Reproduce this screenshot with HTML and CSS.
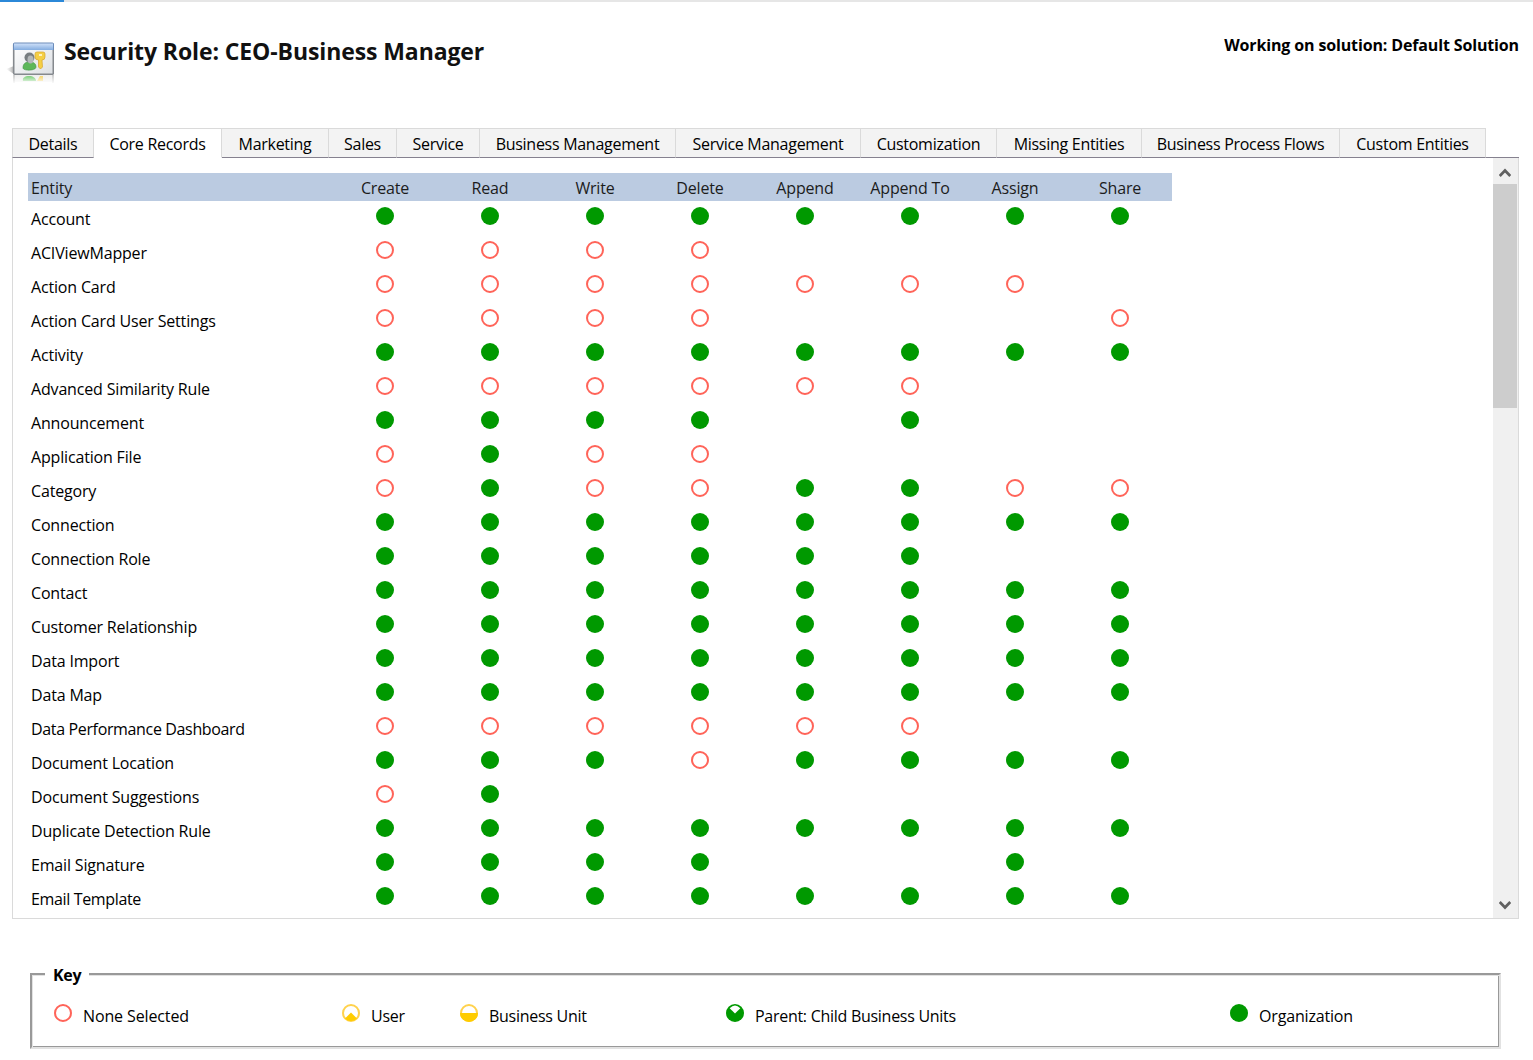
FILE: index.html
```html
<!DOCTYPE html>
<html lang="en">
<head>
<meta charset="utf-8">
<title>Security Role: CEO-Business Manager</title>
<link rel="stylesheet" href="styles.css">
</head>
<body>
<div class="progress"><div class="progress-bar"></div></div>
<header class="header">
<svg class="role-icon" width="48" height="44" viewBox="0 0 48 44">
<defs>
<linearGradient id="bar" x1="0" y1="0" x2="0" y2="1"><stop offset="0" stop-color="#d3e3fa"/><stop offset="1" stop-color="#84ade0"/></linearGradient>
<linearGradient id="pane" x1="0" y1="0" x2="1" y2="1"><stop offset="0" stop-color="#fff"/><stop offset="1" stop-color="#dcdfe3"/></linearGradient>
<linearGradient id="fade" x1="0" y1="0" x2="0" y2="1"><stop offset="0" stop-color="#fff" stop-opacity="0"/><stop offset="1" stop-color="#fff"/></linearGradient>
<linearGradient id="cast" x1="0" y1="0" x2="1" y2="0"><stop offset="0" stop-color="#ccc" stop-opacity="0"/><stop offset="1" stop-color="#aaa"/></linearGradient>
</defs>
<path d="M0 28l8-3v8z" fill="url(#cast)"/>
<path d="M8 34v8M47 34v8" stroke="#999"/>
<rect x="9" y="34" width="37" height="7" fill="#eee"/>
<path d="M17 40c-1-3 2-5 6-5s7 2 7 5z" fill="#6fca6c"/>
<path d="M31 40l3-5h3v5z" fill="#f2d060"/>
<rect x="7" y="34" width="41" height="9" fill="url(#fade)"/>
<rect x="7.700" y="2.700" width="39.600" height="30.600" rx="1" fill="url(#pane)" stroke="#85898e" stroke-width="1.600"/>
<rect x="7" y="2" width="41" height="7" rx="1" fill="url(#bar)"/>
<path d="M7.500 9V3q0-1 1-1h38q1 0 1 1v6" fill="none" stroke="#6c8cb9"/>
<path d="M17 27c0-5 3-6 7-6s6 2 6 5c0 4-13 4-13 1z" fill="#5db75a" stroke="#3f9445" stroke-width=".6"/>
<circle cx="23.500" cy="16.500" r="5" fill="#777d80"/>
<ellipse cx="24.500" cy="18.500" rx="3" ry="4" fill="#b4b8b9"/>
<path d="M29 13q0-2 2-2h6q2 0 2 2v3q0 3-3 3l.5 7-2 2-2-2V19q-3.500 0-3.500-3z" fill="#f5cf45" stroke="#d6a42b" stroke-width=".7"/>
<rect x="33" y="13" width="3" height="2" fill="#fff3bc"/>
</svg>
<h1 class="title">Security Role: CEO-Business Manager</h1>
<div class="solution">Working on solution: Default Solution</div>
</header>
<nav class="tabs">
<div class="tab t1">Details</div><div class="tab t2 active">Core Records</div><div class="tab t3">Marketing</div><div class="tab t4">Sales</div><div class="tab t5">Service</div><div class="tab t6">Business Management</div><div class="tab t7">Service Management</div><div class="tab t8">Customization</div><div class="tab t9">Missing Entities</div><div class="tab t10">Business Process Flows</div><div class="tab t11">Custom Entities</div><div class="tab-rest"></div>
</nav>
<main class="panel">
<div class="content">
<div class="row head"><span>Entity</span><b>Create</b><b>Read</b><b>Write</b><b>Delete</b><b>Append</b><b>Append To</b><b>Assign</b><b>Share</b></div>
<div class="row"><span>Account</span><i class="org"></i><i class="org"></i><i class="org"></i><i class="org"></i><i class="org"></i><i class="org"></i><i class="org"></i><i class="org"></i></div>
<div class="row"><span>ACIViewMapper</span><i class="none"></i><i class="none"></i><i class="none"></i><i class="none"></i></div>
<div class="row"><span>Action Card</span><i class="none"></i><i class="none"></i><i class="none"></i><i class="none"></i><i class="none"></i><i class="none"></i><i class="none"></i></div>
<div class="row"><span>Action Card User Settings</span><i class="none"></i><i class="none"></i><i class="none"></i><i class="none"></i><em></em><em></em><em></em><i class="none"></i></div>
<div class="row"><span>Activity</span><i class="org"></i><i class="org"></i><i class="org"></i><i class="org"></i><i class="org"></i><i class="org"></i><i class="org"></i><i class="org"></i></div>
<div class="row"><span>Advanced Similarity Rule</span><i class="none"></i><i class="none"></i><i class="none"></i><i class="none"></i><i class="none"></i><i class="none"></i></div>
<div class="row"><span>Announcement</span><i class="org"></i><i class="org"></i><i class="org"></i><i class="org"></i><em></em><i class="org"></i></div>
<div class="row"><span>Application File</span><i class="none"></i><i class="org"></i><i class="none"></i><i class="none"></i></div>
<div class="row"><span>Category</span><i class="none"></i><i class="org"></i><i class="none"></i><i class="none"></i><i class="org"></i><i class="org"></i><i class="none"></i><i class="none"></i></div>
<div class="row"><span>Connection</span><i class="org"></i><i class="org"></i><i class="org"></i><i class="org"></i><i class="org"></i><i class="org"></i><i class="org"></i><i class="org"></i></div>
<div class="row"><span>Connection Role</span><i class="org"></i><i class="org"></i><i class="org"></i><i class="org"></i><i class="org"></i><i class="org"></i></div>
<div class="row"><span>Contact</span><i class="org"></i><i class="org"></i><i class="org"></i><i class="org"></i><i class="org"></i><i class="org"></i><i class="org"></i><i class="org"></i></div>
<div class="row"><span>Customer Relationship</span><i class="org"></i><i class="org"></i><i class="org"></i><i class="org"></i><i class="org"></i><i class="org"></i><i class="org"></i><i class="org"></i></div>
<div class="row"><span>Data Import</span><i class="org"></i><i class="org"></i><i class="org"></i><i class="org"></i><i class="org"></i><i class="org"></i><i class="org"></i><i class="org"></i></div>
<div class="row"><span>Data Map</span><i class="org"></i><i class="org"></i><i class="org"></i><i class="org"></i><i class="org"></i><i class="org"></i><i class="org"></i><i class="org"></i></div>
<div class="row"><span class="tight">Data Performance Dashboard</span><i class="none"></i><i class="none"></i><i class="none"></i><i class="none"></i><i class="none"></i><i class="none"></i></div>
<div class="row"><span>Document Location</span><i class="org"></i><i class="org"></i><i class="org"></i><i class="none"></i><i class="org"></i><i class="org"></i><i class="org"></i><i class="org"></i></div>
<div class="row"><span>Document Suggestions</span><i class="none"></i><i class="org"></i></div>
<div class="row"><span>Duplicate Detection Rule</span><i class="org"></i><i class="org"></i><i class="org"></i><i class="org"></i><i class="org"></i><i class="org"></i><i class="org"></i><i class="org"></i></div>
<div class="row"><span>Email Signature</span><i class="org"></i><i class="org"></i><i class="org"></i><i class="org"></i><em></em><em></em><i class="org"></i></div>
<div class="row"><span class="tight">Email Template</span><i class="org"></i><i class="org"></i><i class="org"></i><i class="org"></i><i class="org"></i><i class="org"></i><i class="org"></i><i class="org"></i></div>
</div>
<div class="scrollbar">
<svg class="arrow" width="12" height="26" viewBox="0 0 12 26"><path d="M.7 18L6 12.500l5.300 5.500" fill="none" stroke="#606060" stroke-width="2.800"/></svg>
<div class="thumb"></div>
<svg class="arrow down" width="12" height="26" viewBox="0 0 12 26"><path d="M.7 10L6 15.500 11.300 10" fill="none" stroke="#606060" stroke-width="2.800"/></svg>
</div>
</main>
<fieldset class="key">
<legend>Key</legend>
<div class="keys">
<div class="k k1"><i class="none"></i>None Selected</div>
<div class="k k2"><svg width="18" height="18" viewBox="0 0 18 18"><circle cx="9" cy="9" r="8" fill="#fff" stroke="#ffd24d" stroke-width="2"/><path d="M9 8.500L3 14.500a8.200 8.200 0 0 0 12 0z" fill="#fc0"/></svg>User</div>
<div class="k k3"><svg width="18" height="18" viewBox="0 0 18 18"><circle cx="9" cy="9" r="8" fill="#fff" stroke="#ffd24d" stroke-width="2"/><path d="M0 9a9 9 0 0 0 18 0z" fill="#fc0"/></svg>Business Unit</div>
<div class="k k4"><svg width="18" height="18" viewBox="0 0 18 18"><circle cx="9" cy="9" r="9" fill="#090"/><path d="M9 9.500L3.700 4.300Q9-1.500 14.300 4.300z" fill="#fff"/></svg>Parent: Child Business Units</div>
<div class="k k5"><i class="org"></i>Organization</div>
</div>
</fieldset>
</body>
</html>
```

FILE: styles.css
```css
* { box-sizing: border-box; }
body {
  margin: 0;
  height: 1060px;
  overflow: hidden;
  background: #fff;
  color: #111;
  font: 16px/24px "Open Sans", "Noto Sans", sans-serif;
  letter-spacing: -0.17px;
  white-space: nowrap;
}
.progress { height: 2px; background: #e6e6e6; }
.progress-bar { width: 64px; height: 2px; background: #2b88d8; }
.header {
  display: flex;
  height: 126px;
  padding: 39px 14px 0 6px;
}
.role-icon { flex: none; }
.title {
  margin: -6px 0 0 10px;
  font-size: 23px;
  line-height: 32px;
  font-weight: 700;
  letter-spacing: -0.1px;
}
.solution {
  margin: -8px 0 0 auto;
  font-weight: 700;
  color: #000;
  letter-spacing: -0.14px;
}
.tabs { display: flex; height: 30px; margin: 0 14px 0 12px; letter-spacing: -0.28px; }
.tab {
  flex: none;
  padding: 3px 0 0;
  text-align: center;
  background: #f3f3f3;
  color: #000;
  border-top: 1px solid #dadada;
  border-right: 1px solid #dadada;
  border-bottom: 1px solid #85818f;
}
.tab.active { background: #fff; border-bottom-color: #fff; }
.tab-rest { flex: 1; border-bottom: 1px solid #85818f; }
.t1 { width: 82px; border-left: 1px solid #dadada; }
.t2 { width: 128px; }
.t3 { width: 107px; }
.t4 { width: 68px; }
.t5 { width: 83px; }
.t6 { width: 196px; }
.t7 { width: 185px; }
.t8 { width: 136px; }
.t9 { width: 145px; }
.t10 { width: 198px; }
.t11 { width: 146px; }
.panel {
  display: flex;
  justify-content: space-between;
  height: 761px;
  margin: 0 14px 0 12px;
  border: 1px solid #dadada;
  border-top: 0;
}
.content { width: 1159px; padding: 15px 0 0 15px; overflow: hidden; color: #000; }
.row {
  display: grid;
  grid-template-columns: 304px repeat(8, 105px);
  height: 34px;
  justify-items: center;
}
.row span { justify-self: start; padding: 6px 0 0 3px; }
.row .tight { letter-spacing: -0.35px; }
.row i { margin-top: 6px; }
.row.head { height: 28px; background: #bbcbe1; color: #1c1c1c; }
.row.head span { padding-top: 3px; }
.head b { font-weight: 400; padding: 3px 0 0 1px; }
.org, .none { display: block; width: 18px; height: 18px; border-radius: 50%; flex: none; }
.org { background: #090; }
.none { border: 2px solid #ff6459; background: #fff; }
.scrollbar {
  display: flex;
  flex-direction: column;
  width: 25px;
  padding-right: 1px;
  background: #f0f0f0;
}
.arrow { align-self: center; flex: none; }
.thumb { height: 224px; background: #cdcdcd; }
.down { margin-top: auto; }
.key {
  width: 1471px;
  height: 87px;
  margin: 43px 0 0 30px;
  padding: 0 22px;
  border: 2px solid;
  border-color: #999 #e2e2e2 #e2e2e2 #999;
  box-shadow: inset 1px 1px #e2e2e2, inset -1px -1px #999;
  color: #000;
}
.key legend {
  margin-left: -9px;
  padding: 2px 8px 0;
  background: #fff;
  line-height: 22px;
  font-weight: 700;
  letter-spacing: -0.3px;
}
.keys { display: flex; padding-top: 18px; letter-spacing: -0.28px; }
.k { display: flex; gap: 11px; line-height: 24px; flex: none; }
.k1 { width: 288px; letter-spacing: -0.12px; }
.k2 { width: 118px; }
.k3 { width: 266px; }
.k4 { width: 504px; }
.k5 { letter-spacing: -0.17px; }
```
